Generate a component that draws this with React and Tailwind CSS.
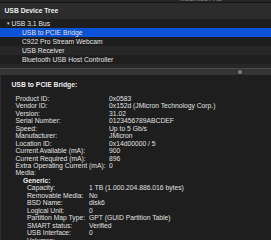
import React from "react";

const TREE = [
  { label: "USB 3.1 Bus", bus: true },
  { label: "USB to PCIE Bridge", selected: true },
  { label: "C922 Pro Stream Webcam" },
  { label: "USB Receiver" },
  { label: "Bluetooth USB Host Controller" },
];

const DETAILS = [
  ["Product ID:", "0x0583"],
  ["Vendor ID:", "0x152d  (JMicron Technology Corp.)"],
  ["Version:", "31.02"],
  ["Serial Number:", "0123456789ABCDEF"],
  ["Speed:", "Up to 5 Gb/s"],
  ["Manufacturer:", "JMicron"],
  ["Location ID:", "0x14d00000 / 5"],
  ["Current Available (mA):", "900"],
  ["Current Required (mA):", "896"],
  ["Extra Operating Current (mA):", "0"],
  ["Media:", ""],
];

const MEDIA = [
  ["Capacity:", "1 TB (1.000.204.886.016 bytes)"],
  ["Removable Media:", "No"],
  ["BSD Name:", "disk6"],
  ["Logical Unit:", "0"],
  ["Partition Map Type:", "GPT (GUID Partition Table)"],
  ["SMART status:", "Verified"],
  ["USB Interface:", "0"],
  ["Volumes:", ""],
];

const TreeRow = ({ item, index }) => {
  const bg = item.selected
    ? "bg-[#0a52d6]"
    : index % 2 === 1
    ? "bg-[#272727]"
    : "bg-[#1e1e1e]";
  return (
    <div className={`h-[9px] flex items-center ${bg}`}>
      {item.bus ? (
        <div className="flex items-center pl-[6px]">
          <span className="text-[4.5px] text-[#cfcfcf] mr-[1px]">▼</span>
          <span>{item.label}</span>
        </div>
      ) : (
        <span className="pl-[22px]">{item.label}</span>
      )}
    </div>
  );
};

export default function App() {
  return (
    <div
      className="w-[271px] h-[240px] overflow-hidden bg-[#1e1e1e] text-[#e0e0e0] text-[6.75px] leading-[7.45px]"
      style={{ fontFamily: '"Liberation Sans", Arial, sans-serif' }}
    >
      {/* window title strip */}
      <div className="h-[3px] bg-[#262626] border-b border-[#141414] overflow-hidden relative">
        <span className="absolute left-[180px] top-[-5px] text-[#8a8a8a]">Macintosh HD</span>
      </div>

      {/* tree header */}
      <div className="h-[16px] bg-[#2c2c2c] flex items-center pl-[4.5px] font-bold text-[#eeeeee]">
        USB Device Tree
      </div>

      {/* tree rows */}
      <div>
        {TREE.map((item, i) => (
          <TreeRow key={item.label} item={item} index={i} />
        ))}
        <div className="h-[4px] bg-[#272727]" />
      </div>

      {/* splitter */}
      <div className="border-t border-[#4a4a4a] h-[7px] bg-[#353535] relative">
        <div className="absolute left-[238px] top-[1px] w-[4px] h-[4px] rounded-full bg-[#7d7d7d]" />
      </div>

      {/* details */}
      <div className="border-l border-[#2e2e2e] pt-[6px]">
        <div className="pl-[10.5px] font-bold text-[#eeeeee]">USB to PCIE Bridge:</div>
        <div className="mt-[6.5px] pl-[14.5px]">
          {DETAILS.map(([k, v]) => (
            <div key={k} className="flex whitespace-nowrap">
              <span className="w-[93.5px] shrink-0">{k}</span>
              <span>{v}</span>
            </div>
          ))}
          <div className="pl-[7.5px] font-bold text-[#eeeeee]">Generic:</div>
          <div className="pl-[11.5px]">
            {MEDIA.map(([k, v]) => (
              <div key={k} className="flex whitespace-nowrap">
                <span className="w-[62px] shrink-0">{k}</span>
                <span>{v}</span>
              </div>
            ))}
          </div>
        </div>
      </div>
    </div>
  );
}
